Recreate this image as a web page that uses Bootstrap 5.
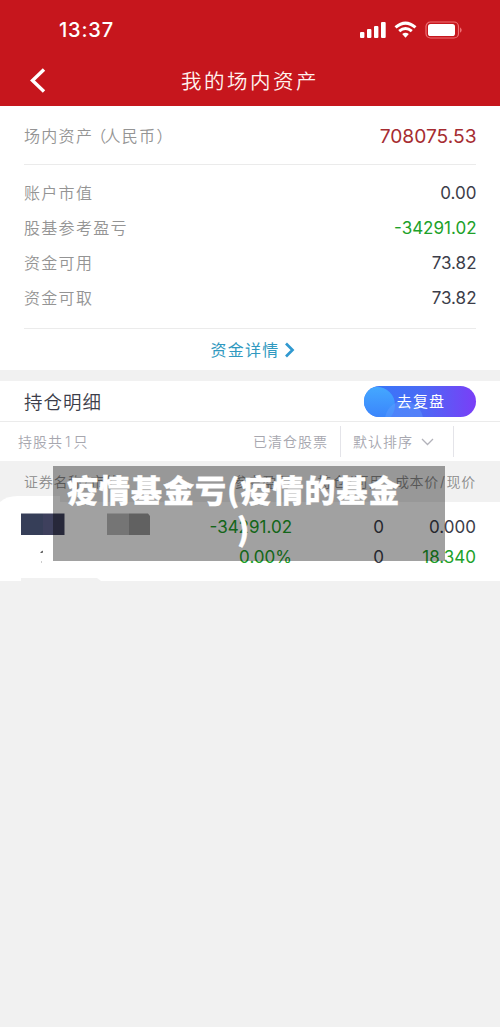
<!DOCTYPE html>
<html lang="zh-CN">
<head>
<meta charset="utf-8">
<meta name="viewport" content="width=device-width, initial-scale=1">
<title>我的场内资产</title>
<link rel="stylesheet" href="https://cdn.jsdelivr.net/npm/bootstrap@5.3.0/dist/css/bootstrap.min.css">
<style>
body{background:#f1f1f1;font-family:Inter,"Noto Sans CJK SC",sans-serif;font-size:16px;color:#3c3d49;line-height:1;overflow-x:hidden}
.top{background:#c6161d;height:106px;color:#fff}
.status{height:60px;padding:0 38px 0 59px}
.clock{font-size:20px;font-weight:500;letter-spacing:.8px}
.titlebar{height:41px}
.titlebar h1{font-size:20.5px;font-weight:350;letter-spacing:2.5px;line-height:1;color:#fff3ef;padding-top:3px}
.back{left:29px;top:7px}
.asset{height:264px;padding:0 24px}
.total{height:59px;border-bottom:1px solid #ebebeb}
.total .num{font-size:19.2px;padding-top:3px}
.paren{margin-left:-3px;margin-right:-3px}
.lines{padding:10px 0 13px}
.line{height:35px}
.line .num{padding-top:2px}
.lbl{color:#949494;letter-spacing:1.3px;font-weight:350}
.total .lbl{padding-top:1px}
.num{font-size:17px;font-weight:400;margin-right:-.5px}
.up{color:#a62c31}
.down{color:#20a129}
.details{height:41px;color:#3099c0;border-top:1px solid #ebebeb;letter-spacing:1.25px;padding:2px 0 0 6px}
.hold{height:41px;padding:0 24px;border-bottom:1px solid #ebebeb}
.hold h2{font-size:18.5px;letter-spacing:1px;font-weight:350;line-height:1;padding-top:3px}
.replay{width:112px;height:31px;font-size:15px;letter-spacing:1.2px;color:#fff;background:linear-gradient(90deg,#3479fa,#496bf5 50%,#7a3ef7)}
.filter{height:39px;font-size:14px;letter-spacing:1px;color:#a7a7af;font-weight:350}
.sep{width:1px;height:31px;background:#e4e4e9}
.heads{height:41px;background:#f1f1f1;color:#8b8b8b;font-size:14px;letter-spacing:.7px;font-weight:350}
.heads i{font-style:normal;margin:0 1px}
.cols{display:grid;grid-template-columns:116px 176px 92px 92px;padding-right:24px}
.cols>*{text-align:right;white-space:nowrap}
.stock{height:79px;padding-top:10px}
.stock .cols{height:30px;align-items:center}
.mosaic{left:0;top:-8px;width:500px;height:87px}
.caption{left:53px;top:466px;width:392px;height:95px;background:rgba(0,0,0,.37);color:#fff;font:900 31px/39px "Noto Sans CJK SC",sans-serif;letter-spacing:1px;padding:3px 30px 0 14px;z-index:3;-webkit-text-stroke:.35px #fff;white-space:nowrap;text-align:left}
.caption span{padding-left:170px}
</style>
</head>
<body class="position-relative">
<header class="top">
  <div class="status d-flex align-items-center justify-content-between">
    <span class="clock">13:37</span>
    <svg width="102" height="18" viewBox="0 0 102 18" fill="#fff">
      <rect x="0" y="11" width="4.4" height="6" rx="1"/><rect x="7" y="8" width="4.4" height="9" rx="1"/><rect x="14" y="5" width="4.4" height="12" rx="1"/><rect x="21" y="1" width="4.7" height="16" rx="1"/>
      <g fill="none" stroke="#fff" stroke-width="3"><path d="M35.500 6.400Q45.500-2.200 55.500 6.400"/><path d="M39.200 10.200Q45.500 4.900 51.800 10.200"/></g>
      <path d="M42.200 13.100Q45.500 10.600 48.800 13.100L45.500 16.800Z"/>
      <rect x="66" y="1" width="32.500" height="16" rx="4.500" fill="none" stroke="#ef7075" stroke-width="1.200"/><rect x="68" y="3" width="27" height="12" rx="2.600"/><path d="M100 6.200Q103.500 9 100 11.800Z" fill="#ef7075"/>
    </svg>
  </div>
  <div class="titlebar position-relative d-flex align-items-center justify-content-center">
    <svg class="back position-absolute" width="18" height="28" viewBox="0 0 18 28" fill="none" stroke="#fff" stroke-width="3.400"><path d="M15 2.500 3.500 13.500 15 24.500"/></svg>
    <h1 class="m-0">我的场内资产</h1>
  </div>
</header>
<main>
  <section class="asset bg-white">
    <div class="total d-flex justify-content-between align-items-center"><span class="lbl">场内资产<span class="paren">（</span>人民币<span>）</span></span><span class="num up">708075.53</span></div>
    <div class="lines">
      <div class="line d-flex justify-content-between align-items-center"><span class="lbl">账户市值</span><span class="num">0.00</span></div>
      <div class="line d-flex justify-content-between align-items-center"><span class="lbl">股基参考盈亏</span><span class="num down">-34291.02</span></div>
      <div class="line d-flex justify-content-between align-items-center"><span class="lbl">资金可用</span><span class="num">73.82</span></div>
      <div class="line d-flex justify-content-between align-items-center"><span class="lbl">资金可取</span><span class="num">73.82</span></div>
    </div>
    <div class="details d-flex justify-content-center align-items-center">资金详情<svg class="ms-1" width="12" height="16" viewBox="0 0 12 16" fill="none" stroke="#3099d0" stroke-width="2.700"><path d="M2 1.500 8.500 8 2 14.500"/></svg></div>
  </section>
  <section class="bg-white" style="margin-top:11px">
    <div class="hold d-flex justify-content-between align-items-center">
      <h2 class="m-0">持仓明细</h2>
      <div class="replay rounded-pill position-relative overflow-hidden d-flex align-items-center justify-content-center">
        <svg class="position-absolute top-0 start-0" width="112" height="31"><defs><linearGradient id="g" x2="0" y2="1"><stop stop-color="#44a8ff"/><stop offset="1" stop-color="#397efb"/></linearGradient></defs><circle cx="13" cy="19" r="18" fill="url(#g)"/><circle cx="40" cy="34" r="19" fill="#64a0ff" opacity=".4"/></svg>
        <span class="position-relative" style="padding-left:2px">去复盘</span>
      </div>
    </div>
    <div class="filter d-flex align-items-center">
      <span style="margin-left:18px">持股共<span style="letter-spacing:0;padding:0 3px 0 2px">1</span>只</span>
      <span class="ms-auto">已清仓股票</span><i class="sep" style="margin:0 12px"></i><span>默认排序</span>
      <svg style="margin:0 19px 0 8px" width="13" height="8" viewBox="0 0 13 8" fill="none" stroke="#b2b2ba" stroke-width="1.300"><path d="M1 1 6.500 6.500 12 1"/></svg><i class="sep" style="margin-right:46px"></i>
    </div>
    <div class="heads cols align-items-center"><span class="text-start ps-4">证券名称<i>/</i>市值</span><span>参考盈亏</span><span>持仓<i>/</i>可用</span><span>成本价<i>/</i>现价</span></div>
    <div class="stock position-relative">
      <svg class="mosaic position-absolute" viewBox="0 0 500 87">
        <path d="M0 8Q6 2 18 2H60V10H0Z" fill="#fff"/><path d="M21 84H97L101 87H21Z" fill="#f1f1f1"/>
        <path d="M21 19.500H43V41H21Z" fill="#363e58"/><path d="M43 19.500H64.500V41H43Z" fill="#3e405d"/>
        <path d="M107 19.500H129V41H107Z" fill="#bababa"/><path d="M129 19.500H148L150 22V41H129Z" fill="#9a9a9a"/>
        <path d="M40 58.500 43 56.500 42.500 59" fill="#333"/><path d="M41 67.500h1v1h-1z" fill="#999"/>
      </svg>
      <div class="cols num position-relative"><span></span><span class="down">-34291.02</span><span>0</span><span>0.000</span></div>
      <div class="cols num position-relative"><span></span><span class="down">0.00%</span><span>0</span><span class="down">18.340</span></div>
    </div>
  </section>
</main>
<div class="caption position-absolute">疫情基金亏(疫情的基金<br><span>)</span></div>
<script src="https://cdn.jsdelivr.net/npm/bootstrap@5.3.0/dist/js/bootstrap.bundle.min.js"></script>
</body>
</html>
